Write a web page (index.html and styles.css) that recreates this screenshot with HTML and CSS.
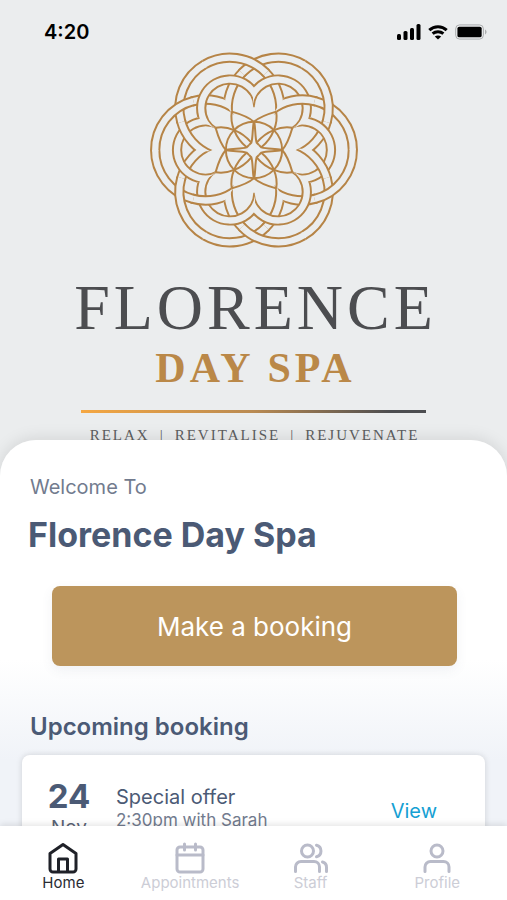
FILE: index.html
```html
<!DOCTYPE html>
<html lang="en">
<head>
<meta charset="utf-8">
<meta name="viewport" content="width=device-width, initial-scale=1">
<title>Florence Day Spa</title>
<link rel="stylesheet" href="styles.css">
</head>
<body>
<div class="app">
  <main class="screen">
    <section class="hero">
      <div class="status">
        <span class="status-time">4:20</span>
        <span class="status-icons">
          <svg class="ico-signal" viewBox="0 0 24 16" aria-hidden="true">
            <rect x="0" y="10" width="4" height="6" rx="1.5"/><rect x="6.5" y="7" width="4" height="9" rx="1.5"/><rect x="13" y="4" width="4" height="12" rx="1.5"/><rect x="19.5" y="0" width="4" height="16" rx="1.5"/>
          </svg>
          <svg class="ico-wifi" viewBox="0 0 20 15" aria-hidden="true">
            <path d="M1.3 5.2C6.2.6 13.8.6 18.7 5.2" class="wave"/>
            <path d="M4.6 8.7C7.7 6 12.3 6 15.4 8.7" class="wave"/>
            <path d="M10 14.5L6.800 11.500C8.600 10 11.400 10 13.200 11.500Z"/>
          </svg>
          <svg class="ico-battery" viewBox="0 0 33 16" aria-hidden="true">
            <rect x=".7" y=".7" width="28.6" height="14.6" rx="4" class="shell"/>
            <rect x="2.5" y="2.5" width="25" height="11" rx="2"/>
            <path d="M31 5.500c2 .8 2 4.200 0 5z" class="cap"/>
          </svg>
        </span>
      </div>
      <svg class="emblem" viewBox="-314 -296 628 592" role="img" aria-label="Florence Day Spa emblem">
        <defs>
          <clipPath id="wedge"><path d="M0 0L300 -519.600H700V519.600H300Z"/></clipPath>
          <clipPath id="wedgeWide"><path d="M-4 0L296 -519.600H700V519.600H296Z"/></clipPath>
          <clipPath id="slice"><path d="M0 0L519.600 -300V300Z"/></clipPath>
          <clipPath id="sliceWide"><path d="M-6 0L513.600 -300V300Z"/></clipPath>
          <g id="tailCw">
            <g clip-path="url(#wedge)"><path class="line" d="M188 146.600A152.500 152.500 0 0 1 48 116.800"/></g>
            <g clip-path="url(#wedgeWide)"><path class="gap" d="M188 146.600A152.500 152.500 0 0 1 48 116.800"/></g>
          </g>
          <g id="tailCcw">
            <g clip-path="url(#wedge)"><path class="line" d="M188 -146.600A152.500 152.500 0 0 0 48 -116.800"/></g>
            <g clip-path="url(#wedgeWide)"><path class="gap" d="M188 -146.600A152.500 152.500 0 0 0 48 -116.800"/></g>
          </g>
          <g id="bandCcw">
            <path class="line" d="M298.500 0A152.500 152.500 0 0 0 182.900 -148"/>
            <path class="gap" d="M298.500 4A152.500 152.500 0 0 0 182.900 -148"/>
          </g>
          <g id="bandCw">
            <path class="line" d="M298.500 0A152.500 152.500 0 0 1 182.900 148"/>
            <path class="gap" d="M298.500 -4A152.500 152.500 0 0 1 182.900 148"/>
          </g>
          <g id="lobe">
            <g clip-path="url(#slice)"><path class="line" d="M105.400 -76.400A86.500 86.500 0 1 1 105.400 76.400"/></g>
            <g clip-path="url(#sliceWide)"><path class="gap" d="M105.400 -76.400A86.500 86.500 0 1 1 105.400 76.400"/></g>
          </g>
          <g id="petal">
            <path d="M-67 -116C-46 -110 -18 -102 0 -85"/>
            <path d="M-67 -116C-71 -92 -66 -74 -60 -60C-53 -42 -44 -26 -22 -8"/>
            <path d="M-1 -84C-5 -60 -3 -40 -8 -22L-15 -15"/>
          </g>
          <g id="quarter">
            <use href="#petal"/>
            <use href="#petal" transform="scale(-1 1)"/>
          </g>
        </defs>
        <use href="#tailCw"/><use href="#tailCw" transform="rotate(60)"/><use href="#tailCw" transform="rotate(120)"/>
        <use href="#tailCw" transform="rotate(180)"/><use href="#tailCw" transform="rotate(240)"/><use href="#tailCw" transform="rotate(300)"/>
        <use href="#tailCcw" transform="rotate(-60)"/><use href="#tailCcw" transform="rotate(-240)"/>
        <use href="#lobe"/><use href="#lobe" transform="rotate(60)"/><use href="#lobe" transform="rotate(120)"/>
        <use href="#lobe" transform="rotate(180)"/><use href="#lobe" transform="rotate(240)"/><use href="#lobe" transform="rotate(300)"/>
        <use href="#tailCcw"/><use href="#tailCcw" transform="rotate(-120)"/>
        <use href="#tailCcw" transform="rotate(-180)"/><use href="#tailCcw" transform="rotate(-300)"/>
        <use href="#bandCcw"/><use href="#bandCcw" transform="rotate(60)"/><use href="#bandCcw" transform="rotate(120)"/>
        <use href="#bandCcw" transform="rotate(180)"/><use href="#bandCcw" transform="rotate(240)"/><use href="#bandCcw" transform="rotate(300)"/>
        <use href="#bandCw"/><use href="#bandCw" transform="rotate(60)"/><use href="#bandCw" transform="rotate(120)"/>
        <use href="#bandCw" transform="rotate(180)"/><use href="#bandCw" transform="rotate(240)"/><use href="#bandCw" transform="rotate(300)"/>
        <g class="core">
          <use href="#quarter"/><use href="#quarter" transform="rotate(90)"/><use href="#quarter" transform="rotate(180)"/><use href="#quarter" transform="rotate(270)"/>
          <circle r="85"/>
        </g>
      </svg>
      <div class="brand">FLORENCE</div>
      <div class="brand-sub">DAY SPA</div>
      <div class="rule"></div>
      <div class="tagline"><span>RELAX</span><span>|</span><span>REVITALISE</span><span>|</span><span>REJUVENATE</span></div>
    </section>

    <section class="panel">
      <p class="welcome">Welcome To</p>
      <h1 class="title">Florence Day Spa</h1>
      <button class="book" type="button">Make a booking</button>
      <h2 class="subtitle">Upcoming booking</h2>
      <article class="card">
        <div class="date"><span class="day">24</span><span class="month">Nov</span></div>
        <div class="details"><span class="offer">Special offer</span><span class="when">2:30pm with Sarah</span></div>
        <a class="view" href="#view">View</a>
      </article>
    </section>
  </main>

  <nav class="tabs" aria-label="Main">
    <a class="tab active" href="#home">
      <svg viewBox="0 0 32 32" aria-hidden="true"><path d="M3 11.500L16 2.500L29 11.500V27a3 3 0 0 1-3 3H6a3 3 0 0 1-3-3Z"/><path d="M11.500 29.500V17h9v12.500"/></svg>
      <span>Home</span>
    </a>
    <a class="tab" href="#appointments">
      <svg viewBox="0 0 32 32" aria-hidden="true"><rect x="3" y="5" width="26" height="25" rx="3"/><path d="M3 13h26M10.500 2v6M21.500 2v6"/></svg>
      <span>Appointments</span>
    </a>
    <a class="tab" href="#staff">
      <svg class="wide" viewBox="0 0 36 32" aria-hidden="true"><circle cx="14.500" cy="9" r="6"/><path d="M2.500 29.500V25a5.500 5.500 0 0 1 5.500-5.500h13a5.500 5.500 0 0 1 5.500 5.500v4.500M23.500 3.200a6 6 0 0 1 0 11.600M29.500 20a5.500 5.500 0 0 1 4 5.500v4"/></svg>
      <span>Staff</span>
    </a>
    <a class="tab" href="#profile">
      <svg viewBox="0 0 32 32" aria-hidden="true"><circle cx="16" cy="9" r="6"/><path d="M4 29.500V25a5.500 5.500 0 0 1 5.500-5.500h13a5.500 5.500 0 0 1 5.500 5.500v4.500"/></svg>
      <span>Profile</span>
    </a>
  </nav>
</div>
</body>
</html>
```
FILE: styles.css
```css
* { box-sizing: border-box; }

body {
  margin: 0;
  font-family: Inter, "Open Sans", sans-serif;
  color: #4b5a75;
}

a { text-decoration: none; }

.app {
  display: flex;
  flex-direction: column;
  height: 100vh;
  background: #ebedee;
}

.screen {
  flex: 1;
  min-height: 0;
  overflow-y: auto;
  scrollbar-width: none;
  display: flex;
  flex-direction: column;
}

/* Brand header */
.hero {
  flex: none;
  display: flex;
  flex-direction: column;
  align-items: center;
}

.status {
  align-self: stretch;
  display: flex;
  align-items: center;
  justify-content: space-between;
  height: 52px;
  padding: 12px 20px 0 44px;
  color: #000;
}

.status-time { font-size: 20px; font-weight: 600; }
.status-icons { display: flex; align-items: center; gap: 7px; }
.ico-signal { width: 24px; height: 16px; }
.ico-wifi { width: 20px; height: 15px; }
.ico-battery { width: 32px; height: 16px; }
.wave { fill: none; stroke: #000; stroke-width: 3; }
.shell { fill: none; stroke: #a8aaab; stroke-width: 1; }
.cap { fill: #a8aaab; }

.emblem {
  width: 208px;
  height: 196px;
  fill: none;
}

.line { stroke: #b68446; stroke-width: 31; }
.gap { stroke: #ebedee; stroke-width: 19; }
.core { stroke: #b68446; stroke-width: 6; }

.brand {
  margin-top: 24px;
  padding-left: 4px;
  font-family: "Liberation Serif", serif;
  font-size: 64px;
  line-height: 72px;
  letter-spacing: 4px;
  color: #4c4d50;
}

.brand-sub {
  padding-left: 4px;
  font-family: "Liberation Serif", serif;
  font-size: 42px;
  font-weight: 700;
  line-height: 48px;
  letter-spacing: 4px;
  color: #ba8848;
}

.rule {
  width: 68%;
  height: 3px;
  margin-top: 18px;
  background: linear-gradient(90deg, #f5a742, #b98a52 50%, #4c4d50 90%);
}

.tagline {
  display: flex;
  gap: 10px;
  margin-top: 12px;
  padding-left: 2px;
  font-family: "Liberation Serif", serif;
  font-size: 15px;
  line-height: 20px;
  letter-spacing: 2px;
  color: #5d5e60;
}

/* Content sheet */
.panel {
  position: relative;
  flex: none;
  display: flex;
  flex-direction: column;
  margin-top: -5px;
  padding: 35px 22px 24px;
  border-radius: 36px 36px 0 0;
  background: linear-gradient(#fff 220px, #f0f3f8 320px);
  box-shadow: 0 -2px 16px rgba(0, 0, 0, 0.1);
}

.welcome {
  margin: 0 8px;
  font-size: 20px;
  line-height: 24px;
  color: #727b8e;
}

.title {
  margin: 16px 6px 0;
  font-size: 34px;
  line-height: 40px;
  font-weight: 700;
}

.book {
  height: 80px;
  margin: 31px 28px 0 30px;
  border: 0;
  border-radius: 8px;
  background: #bc955c;
  color: #fff;
  font: inherit;
  font-size: 26px;
  box-shadow: 0 4px 12px rgba(75, 90, 117, 0.08);
}

.subtitle {
  margin: 47px 8px 0;
  font-size: 24px;
  line-height: 28px;
  font-weight: 600;
}

.card {
  display: flex;
  align-items: center;
  margin-top: 14px;
  padding: 24px 48px 12px 26px;
  border-radius: 8px;
  background: #fff;
  box-shadow: 0 0 6px rgba(0, 0, 0, 0.14);
}

.date {
  display: flex;
  flex-direction: column;
  align-items: center;
  width: 42px;
}

.day { font-size: 33px; line-height: 34px; font-weight: 700; }
.month { font-size: 19px; line-height: 30px; color: #5b6375; }

.details {
  flex: 1;
  align-self: flex-start;
  display: flex;
  flex-direction: column;
  margin: 6px 0 0 26px;
}

.offer { font-size: 20px; line-height: 24px; }
.when { font-size: 17px; line-height: 23px; color: #727b8e; }
.view { font-size: 20px; line-height: 24px; color: #15a0d3; }

/* Tab bar */
.tabs {
  position: relative;
  flex: none;
  display: grid;
  grid-template-columns: 10fr 10fr 9fr 11fr;
  height: 74px;
  padding-top: 16px;
  background: #fff;
  box-shadow: 0 -2px 6px rgba(0, 0, 0, 0.1);
}

.tab {
  display: flex;
  flex-direction: column;
  align-items: center;
  font-size: 15px;
  line-height: 18px;
  color: #cccdd6;
}

.tab svg {
  width: 32px;
  height: 32px;
  fill: none;
  stroke: #b9bbc9;
  stroke-width: 3;
  stroke-linecap: round;
  stroke-linejoin: round;
}

.tab .wide { width: 36px; }
.active { color: #2a2c33; }
.active svg { stroke: #1f2128; }
```
